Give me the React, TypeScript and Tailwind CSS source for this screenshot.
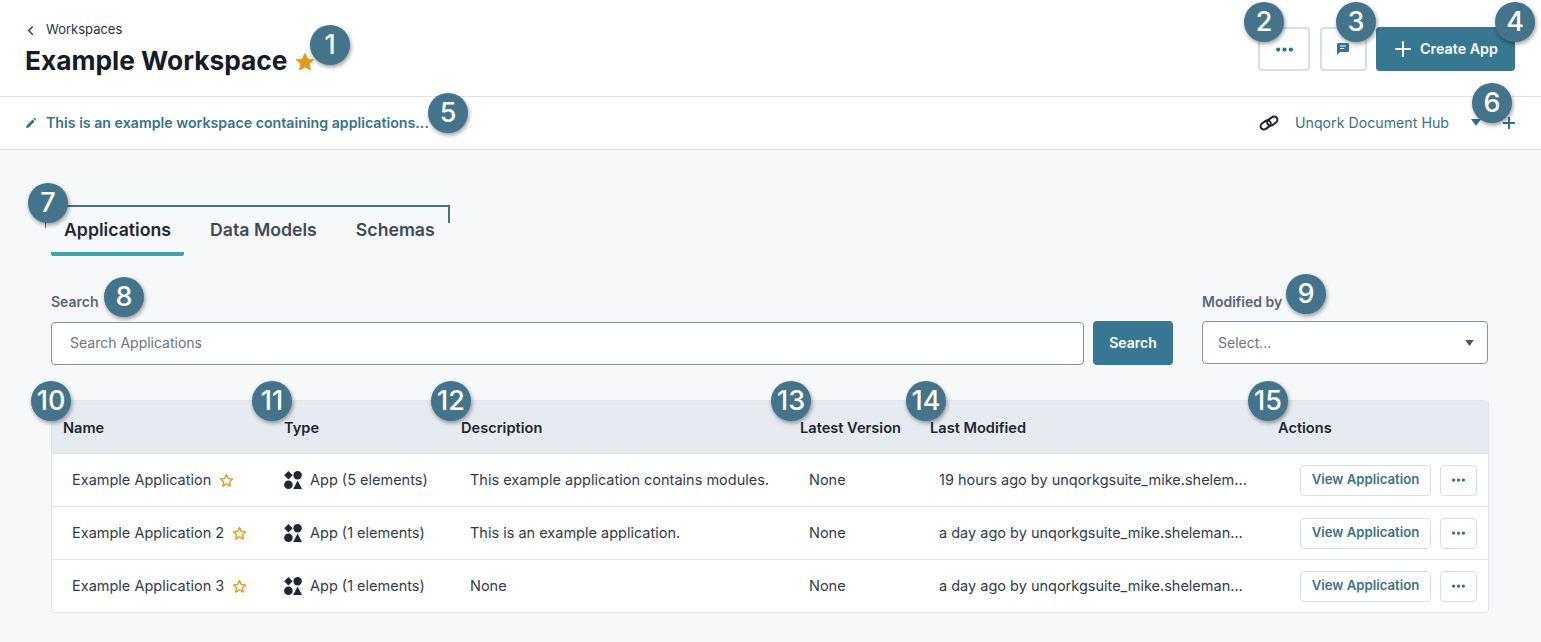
import { ChevronLeft, Plus } from "lucide-react";

const rows = [
  { name: "Example Application", type: "App (5 elements)", desc: "This example application contains modules.", modified: "19 hours ago by unqorkgsuite_mike.shelem..." },
  { name: "Example Application 2", type: "App (1 elements)", desc: "This is an example application.", modified: "a day ago by unqorkgsuite_mike.sheleman..." },
  { name: "Example Application 3", type: "App (1 elements)", desc: "None", modified: "a day ago by unqorkgsuite_mike.sheleman..." },
];

const badges = [
  { n: 1, cls: "left-[310px] top-[25px]" },
  { n: 2, cls: "left-[1244px] top-[2px]" },
  { n: 3, cls: "left-[1336px] top-[2px]" },
  { n: 4, cls: "left-[1495px] top-[2px]" },
  { n: 5, cls: "left-[428px] top-[93px]" },
  { n: 6, cls: "left-[1472px] top-[83px]" },
  { n: 7, cls: "left-[28px] top-[183px]" },
  { n: 8, cls: "left-[104px] top-[277px]" },
  { n: 9, cls: "left-[1286px] top-[274px]" },
  { n: 10, cls: "left-[31px] top-[381px]" },
  { n: 11, cls: "left-[252px] top-[381px]" },
  { n: 12, cls: "left-[431px] top-[381px]" },
  { n: 13, cls: "left-[771px] top-[381px]" },
  { n: 14, cls: "left-[906px] top-[381px]" },
  { n: 15, cls: "left-[1248px] top-[381px]" },
];

function Star({ filled, className }: { filled?: boolean; className: string }) {
  return (
    <svg viewBox="0 0 24 24" className={className} fill={filled ? "#e09a1f" : "none"} stroke="#e0a030" strokeWidth={filled ? 1 : 2.4} strokeLinejoin="round">
      <path d="M12 2.5l2.9 6.2 6.7.8-5 4.6 1.4 6.7L12 17.4l-6 3.4 1.4-6.7-5-4.6 6.7-.8z" />
    </svg>
  );
}

function Dots({ className }: { className: string }) {
  return (
    <svg viewBox="0 0 16 4" className={className} fill="currentColor">
      <circle cx="2" cy="2" r="2" />
      <circle cx="8" cy="2" r="2" />
      <circle cx="14" cy="2" r="2" />
    </svg>
  );
}

function AppIcon() {
  return (
    <svg viewBox="0 0 18 18" className="w-[18px] h-[18px] shrink-0" fill="#1f2733">
      <path d="M4.4 0l4.2 4.3-4.2 4.3L.2 4.3z" />
      <circle cx="13.6" cy="4.2" r="4.2" />
      <circle cx="4.4" cy="13.7" r="4.3" />
      <path d="M13.6 9.6l4.4 8.4H9.2z" />
    </svg>
  );
}

export default function App() {
  return (
    <div className="relative w-[1541px] h-[642px] overflow-hidden bg-[#f6f8fa] text-[#2a3340] font-['Inter',sans-serif]">
      {/* Header */}
      <header className="h-[97px] bg-white border-b border-[#dde1e8] flex justify-between pl-[25px] pr-[26px]">
        <div>
          <div className="flex items-center gap-[8px] -ml-[2px] mt-[21px] h-[18px] text-[13px]">
            <ChevronLeft size={15} strokeWidth={2} className="text-[#333c48]" />
            <span>Workspaces</span>
          </div>
          <div className="flex items-center gap-[7px] mt-[4px]">
            <h1 className="text-[26.3px] leading-[36px] font-bold text-[#141b29]">Example Workspace</h1>
            <Star filled className="w-[22px] h-[22px] mt-[2px]" />
          </div>
        </div>
        <div className="flex items-start gap-[9px] pt-[27px]">
          <button className="w-[52px] h-[44px] mr-px bg-white border-2 border-[#d7e0e6] rounded flex items-center justify-center text-[#2f6f8b]">
            <Dots className="w-[17px] h-[5px]" />
          </button>
          <button className="w-[47px] h-[44px] bg-white border-2 border-[#d7e0e6] rounded flex items-center justify-center">
            <svg viewBox="0 0 12 12" className="w-[12px] h-[12px] -ml-px" fill="#2f7490">
              <path d="M1.5 0h9A1.5 1.5 0 0 1 12 1.5v6A1.5 1.5 0 0 1 10.5 9H3l-3 3V1.5A1.5 1.5 0 0 1 1.5 0z" />
              <path d="M3 2.6h6v1H3zM3 5h4.2v1H3z" fill="#fff" />
            </svg>
          </button>
          <button className="w-[139px] h-[44px] bg-[#377792] rounded text-white flex items-center justify-center gap-[5px] pr-[2px] text-[14.3px] font-semibold">
            <Plus size={24} strokeWidth={2} />
            Create App
          </button>
        </div>
      </header>

      {/* Description bar */}
      <div className="h-[53px] bg-white border-b border-[#dde1e8] flex items-center justify-between pl-[26px] pr-[26px]">
        <div className="flex items-center gap-[10px] text-[14.2px] font-semibold text-[#3a7288]">
          <svg viewBox="0 0 10 10" className="w-[10px] h-[10px]" fill="#2f7490">
            <path d="M0 10l.6-2.6L6.6 1.4l2 2-6 6zM7.3.7l.6-.6a.6.6 0 0 1 .8 0l1.2 1.2a.6.6 0 0 1 0 .8l-.6.6z" />
          </svg>
          <span>This is an example workspace containing applications...</span>
        </div>
        <div className="flex items-center text-[14.2px] text-[#3a7288]">
          <svg viewBox="0 0 20 18" className="w-[20px] h-[18px] mr-[16px]" fill="none" stroke="#1d2430" strokeWidth={2}>
            <rect x="1.2" y="7.6" width="11" height="6.6" rx="3.3" transform="rotate(-35 6.7 10.9)" />
            <rect x="7.8" y="3.8" width="11" height="6.6" rx="3.3" transform="rotate(-35 13.3 7.1)" />
          </svg>
          <span className="mr-[22px]">Unqork Document Hub</span>
          <svg viewBox="0 0 10 7" className="w-[10px] h-[7px] mr-[19px]" fill="#2f6f8b">
            <path d="M0 0h10L5 7z" />
          </svg>
          <Plus size={18} strokeWidth={2.7} className="text-[#2f6f8b] -mr-[3px]" />
        </div>
      </div>

      {/* Tabs */}
      <div className="flex gap-[13px] pl-[51px] mt-[60px] h-[46px]">
        <div className="px-[13px] pt-[6px] border-b-4 border-[#3ea3ad] rounded-b-[2px] text-[17.7px] leading-[28px] font-semibold text-[#1e2632]">Applications</div>
        <div className="px-[13px] pt-[6px] text-[17.7px] leading-[28px] font-semibold text-[#3f4a59]">Data Models</div>
        <div className="px-[13px] pt-[6px] text-[17.7px] leading-[28px] font-semibold text-[#3f4a59]">Schemas</div>
      </div>

      {/* Filters */}
      <div className="flex pl-[51px] pr-[52px] mt-[35px]">
        <div className="w-[1122px]">
          <div className="text-sm font-semibold text-[#5a6675] h-[20px] leading-[20px] mt-[1px]">Search</div>
          <div className="flex gap-[9px] items-center mt-[9px]">
            <div className="w-[1033px] h-[43px] bg-white border border-[#8b939e] rounded flex items-center pl-[18px] text-sm text-[#6b7480]">Search Applications</div>
            <button className="w-[80px] h-[44px] bg-[#377792] rounded text-white text-sm font-semibold">Search</button>
          </div>
        </div>
        <div className="ml-[29px] flex-1">
          <div className="text-sm font-semibold text-[#5a6675] h-[20px] leading-[20px] mt-[1px]">Modified by</div>
          <div className="h-[43px] mt-[9px] mr-px bg-white border border-[#8b939e] rounded flex items-center justify-between pl-[15px] pr-[13px] text-sm text-[#6b7480]">
            <span>Select...</span>
            <svg viewBox="0 0 10 7" className="w-[9px] h-[6px]" fill="#4b5563">
              <path d="M0 0h10L5 7z" />
            </svg>
          </div>
        </div>
      </div>

      {/* Table */}
      <div className="mx-[51px] mt-[35px] w-[1438px] border border-[#e1e5eb] rounded bg-white overflow-hidden text-[14.5px]">
        <div className="grid grid-cols-[221px_177px_339px_130px_348px_1fr] h-[52px] items-center pl-[11px] pt-[3px] bg-[#e6eaf1] text-[14.6px] font-semibold text-[#1e2632]">
          <div>Name</div>
          <div>Type</div>
          <div>Description</div>
          <div>Latest Version</div>
          <div>Last Modified</div>
          <div>Actions</div>
        </div>
        {rows.map((r) => (
          <div key={r.name} className="grid grid-cols-[221px_177px_339px_130px_348px_1fr] h-[53px] items-center pl-[11px] border-t border-[#e1e5eb] text-[#333c48]">
            <div className="pl-[9px] flex items-center gap-[8px]">
              <span>{r.name}</span>
              <Star className="w-[15px] h-[15px]" />
            </div>
            <div className="flex items-center gap-[8px]">
              <AppIcon />
              <span>{r.type}</span>
            </div>
            <div className="pl-[9px]">{r.desc}</div>
            <div className="pl-[9px]">None</div>
            <div className="pl-[9px]">{r.modified}</div>
            <div className="pl-[22px] flex items-center gap-[9px]">
              <button className="w-[131px] h-[31px] bg-white border border-[#d7e0e6] rounded text-[13.2px] font-semibold text-[#3a7288]">View Application</button>
              <button className="w-[37px] h-[31px] bg-white border border-[#d7e0e6] rounded flex items-center justify-center text-[#2f6f8b]">
                <Dots className="w-[13px] h-[4px]" />
              </button>
            </div>
          </div>
        ))}
      </div>

      {/* Annotation bracket over the tabs */}
      <div className="absolute left-[45px] top-[205px] w-[405px] h-[18px] border-t-2 border-r-2 border-[#44748c]" />
      <div className="absolute left-[45px] top-[205px] w-px h-[23px] bg-[#44748c]" />

      {/* Numbered annotations */}
      {badges.map((b) => (
        <div
          key={b.n}
          className={`absolute ${b.cls} w-[40px] h-[40px] rounded-full bg-[#44748c] text-white flex items-center justify-center text-[27px] font-medium shadow-[1px_2px_4px_rgba(0,0,0,0.4)]`}
        >
          {b.n}
        </div>
      ))}
    </div>
  );
}
